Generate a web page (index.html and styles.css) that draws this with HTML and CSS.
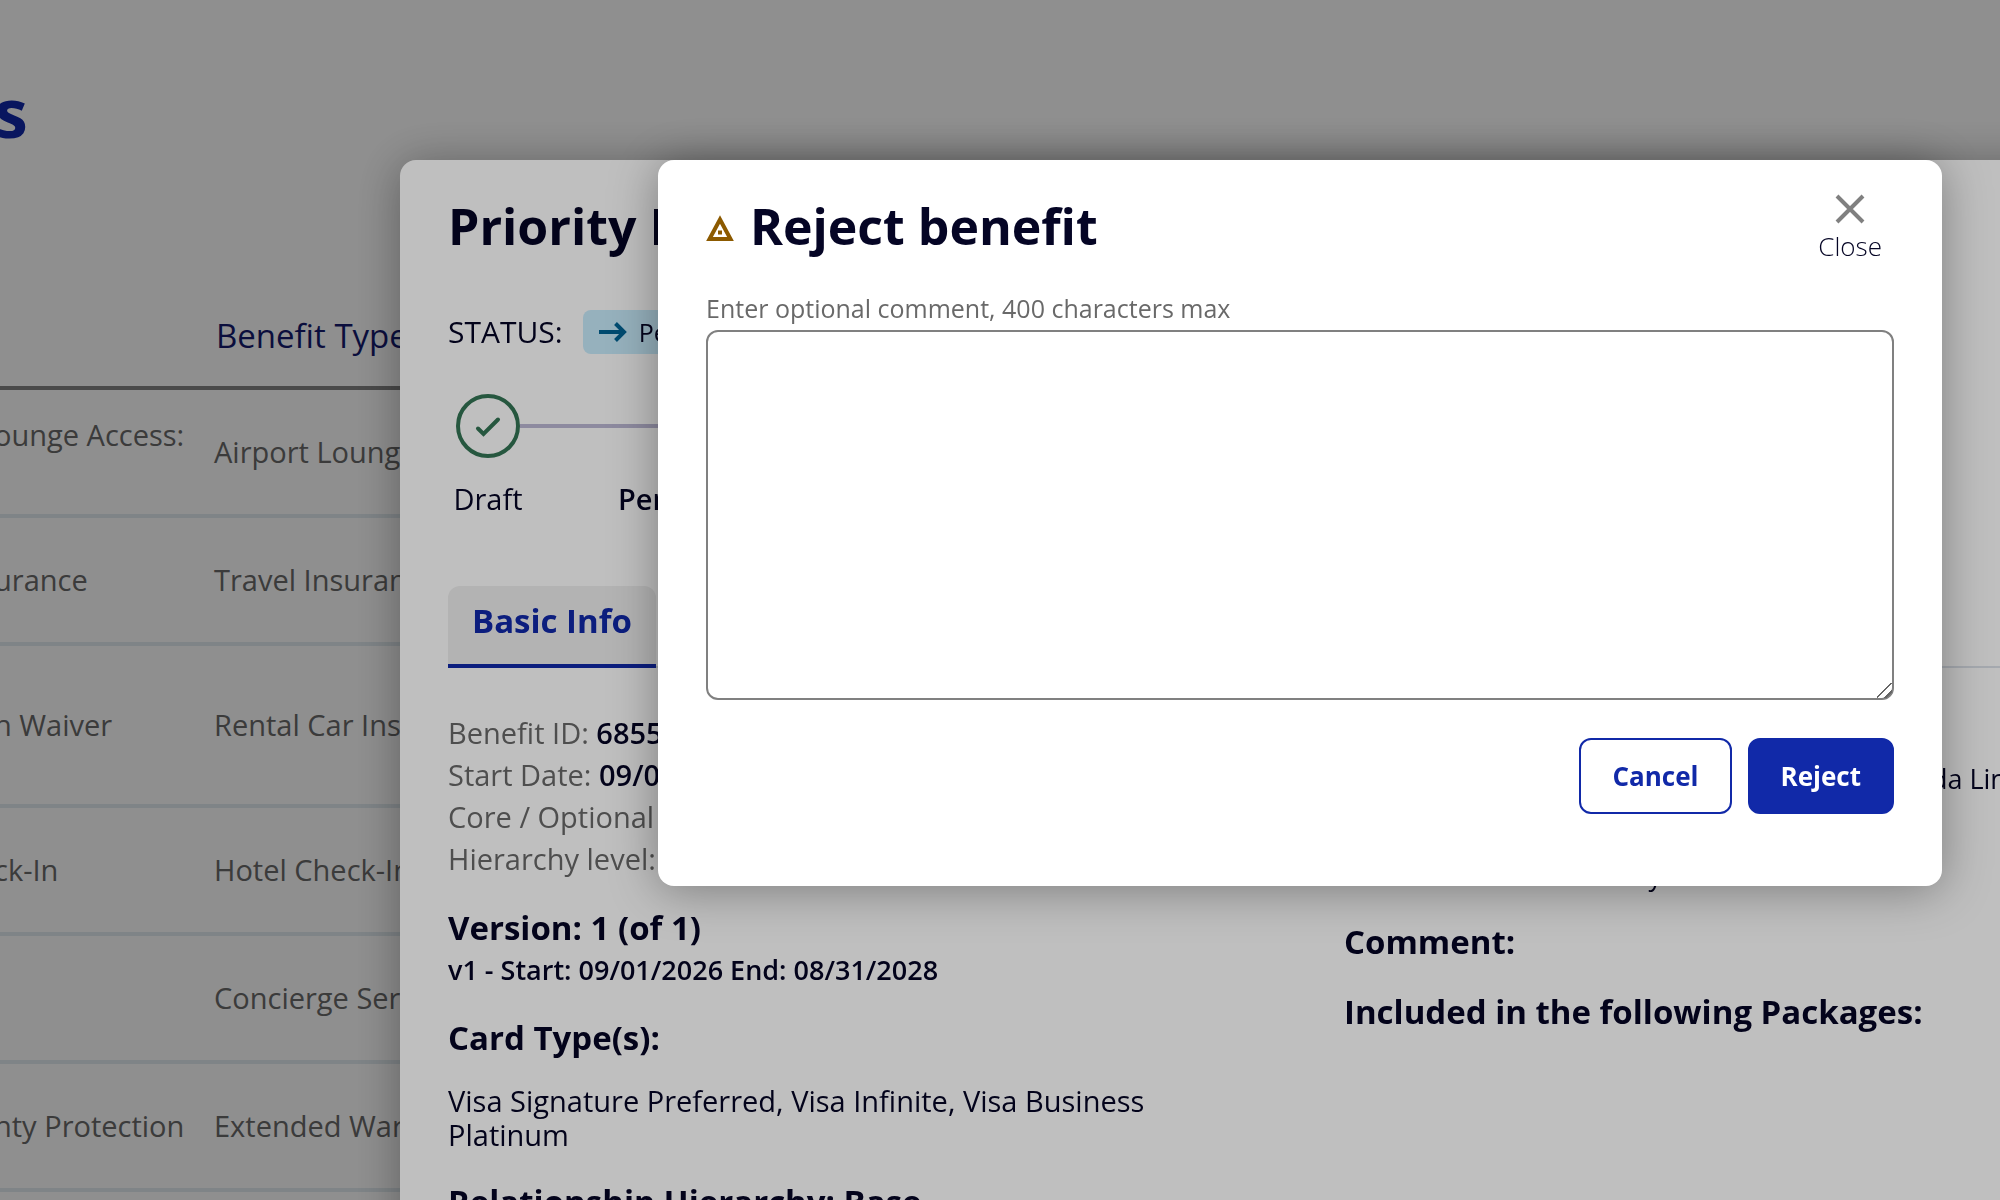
FILE: index.html
```
<!DOCTYPE html>
<html lang="en">
  <head>
    <meta charset="utf-8" />
    <meta name="viewport" content="width=device-width, initial-scale=1" />
    <title>Benefits</title>
    <link rel="stylesheet" href="styles.css">
  </head>
  <body>
    <main class="page">
      <h1>s</h1>
      <table class="benefits">
        <thead>
          <tr>
            <th class="name-col"></th>
            <th>Benefit Type</th>
          </tr>
        </thead>
        <tbody>
          <tr>
            <td>ounge Access:<br />&nbsp;</td>
            <td>Airport Lounge</td>
          </tr>
          <tr>
            <td>urance</td>
            <td>Travel Insurance</td>
          </tr>
          <tr>
            <td>&nbsp;<br />n Waiver<br />&nbsp;</td>
            <td>Rental Car Insurance</td>
          </tr>
          <tr>
            <td>ck-In</td>
            <td>Hotel Check-In</td>
          </tr>
          <tr>
            <td></td>
            <td>Concierge Service</td>
          </tr>
          <tr>
            <td>nty Protection</td>
            <td>Extended Warranty</td>
          </tr>
        </tbody>
      </table>
    </main>

    <!-- benefit details -->
    <div class="overlay">
      <section class="panel">
        <h2>Priority Pass</h2>
        <div class="status">
          <span>STATUS:</span>
          <span class="chip">
            <svg width="28" height="20" viewBox="0 0 28 20" fill="none" stroke="#006496" stroke-width="4">
              <path d="M0 10h25M16.500 1.500l8.500 8.500-8.500 8.500" />
            </svg>
            Pending
          </span>
        </div>
        <ol class="steps">
          <li>
            <svg width="64" height="64" viewBox="0 0 64 64" fill="none" stroke="#337454" stroke-width="4">
              <circle cx="32" cy="32" r="30" />
              <path d="M22 34.500l5.500 5.500 14.500-14.500" stroke-linecap="round" />
            </svg>
            <span>Draft</span>
          </li>
          <li class="current">
            <svg width="64" height="64" viewBox="0 0 64 64" fill="none" stroke="#1028a9" stroke-width="4">
              <circle cx="32" cy="32" r="30" />
            </svg>
            <span>Pending Approval</span>
          </li>
        </ol>
        <div class="tabs">
          <button type="button" class="tab">Basic Info</button>
        </div>
        <div class="details">
          <div>
            <ul class="info">
              <li>Benefit ID: <b>68550</b></li>
              <li>Start Date: <b>09/01/2026</b></li>
              <li>Core / Optional <b>Core</b></li>
              <li>Hierarchy level: <b>Base</b></li>
            </ul>
            <h3>Version: 1 (of 1)</h3>
            <p class="version">v1 - Start: 09/01/2026 End: 08/31/2028</p>
            <h3>Card Type(s):</h3>
            <p class="cards">Visa Signature Preferred, Visa Infinite, Visa Business Platinum</p>
            <h3>Relationship Hierarchy: Base</h3>
          </div>
          <div class="history">
            <h3>History:</h3>
            <ul class="log">
              <li><span class="log-date">06/20/2026 Created</span><span>Linda Lindgren</span></li>
              <li>Sent for review</li>
              <li>06/21/2026 Submitted by</li>
            </ul>
            <h3>Comment:</h3>
            <h3>Included in the following Packages:</h3>
          </div>
        </div>
      </section>
    </div>

    <!-- reject dialog -->
    <div class="overlay">
      <form class="modal" role="dialog" aria-labelledby="modal-title">
        <div class="modal-header">
          <svg width="28" height="26" viewBox="0 0 28 26" fill="none" stroke="#8c5a00" stroke-width="4">
            <path d="M14 4.500L24.500 24H3.500z" />
            <path d="M12 17.500h4" />
          </svg>
          <h2 id="modal-title">Reject benefit</h2>
          <button type="button" class="close">
            <svg width="30" height="30" viewBox="0 0 30 30" fill="none" stroke="#808080" stroke-width="4">
              <path d="M2 2l26 26M28 2L2 28" />
            </svg>
            Close
          </button>
        </div>
        <label for="comment">Enter optional comment, 400 characters max</label>
        <textarea id="comment" name="comment" maxlength="400"></textarea>
        <div class="actions">
          <button type="button" class="btn">Cancel</button>
          <button type="submit" class="btn primary">Reject</button>
        </div>
      </form>
    </div>
  </body>
</html>
```
FILE: styles.css
```
* {
  box-sizing: border-box;
}
body {
  margin: 0;
  height: 100vh;
  overflow: hidden;
  background: #fff;
  color: #050525;
  font-family: "Open Sans", sans-serif;
  font-size: 29px;
  line-height: 34px;
}
h1, h2, h3, p, ul, ol {
  margin: 0;
  padding: 0;
}
ul, ol {
  list-style: none;
}
button {
  font-family: inherit;
  cursor: pointer;
}
h2 {
  font-size: 50px;
  line-height: 60px;
}
h3 {
  font-size: 33px;
  line-height: 40px;
}

/* table page */
.page {
  padding-top: 72px;
  margin-left: -6px;
}
h1 {
  font-size: 68px;
  line-height: 80px;
  color: #1028a9;
  margin-bottom: 140px;
}
.benefits {
  width: 100%;
  border-spacing: 0;
}
.benefits th {
  padding: 22px 0 28px 2px;
  font-size: 33px;
  font-weight: 400;
  line-height: 44px;
  text-align: left;
  color: #141a6e;
  border-bottom: 4px solid #848484;
}
.benefits .name-col {
  width: 220px;
}
.benefits td {
  height: 128px;
  padding: 28px 0;
  color: #696969;
  border-bottom: 4px solid #e2ebf0;
}

/* overlays */
.overlay {
  position: fixed;
  inset: 0;
  padding-top: 160px;
  background: rgba(0, 0, 0, 0.25);
  overflow: hidden;
}
.panel,
.modal {
  background: #fff;
  border-radius: 16px;
  box-shadow: 0 4px 48px rgba(0, 0, 0, 0.35);
}

/* details panel */
.panel {
  width: 90%;
  min-height: 100%;
  margin-left: 20%;
  padding: 36px 48px;
}
.status {
  display: flex;
  align-items: center;
  gap: 20px;
  margin-top: 54px;
  font-size: 30px;
  line-height: 44px;
}
.chip {
  display: flex;
  align-items: center;
  gap: 12px;
  padding: 0 16px;
  border-radius: 8px;
  background: #c8ecfd;
  font-size: 25px;
}
.steps {
  display: flex;
  margin-top: 40px;
}
.steps li {
  position: relative;
  display: flex;
  flex-direction: column;
  align-items: center;
  gap: 24px;
  width: 80px;
  margin-right: 90px;
}
.steps li:first-child::after {
  content: "";
  position: absolute;
  top: 30px;
  left: 72px;
  width: 188px;
  height: 4px;
  background: #bcb9d5;
}
.steps .current {
  width: auto;
  font-weight: 600;
}
.tabs {
  display: flex;
  margin-top: 70px;
  background: linear-gradient(#dde2ea, #dde2ea) bottom / 100% 2px no-repeat;
}
.tab {
  padding: 15px 24px 23px;
  border: 0;
  border-bottom: 4px solid #1028a9;
  border-radius: 12px 12px 0 0;
  background: #efefef;
  color: #1028a9;
  font-size: 33px;
  font-weight: 700;
  line-height: 40px;
}
.details {
  display: grid;
  grid-template-columns: 1fr 1fr;
  gap: 88px;
  margin-top: 44px;
}
.info {
  line-height: 42px;
  color: #696969;
}
.info b {
  font-weight: 600;
  color: #050525;
}
.details h3 {
  margin-top: 28px;
}
.version {
  margin-top: 2px;
  font-size: 27px;
  font-weight: 600;
  line-height: 40px;
}
.cards {
  margin: 26px 0 30px;
}
.details .history h3 {
  margin-top: 30px;
}
.details .history h3:first-child {
  margin-top: 0;
}
.log {
  display: flex;
  flex-direction: column;
  gap: 14px;
  padding-top: 10px;
  font-size: 27px;
}
.log li {
  display: flex;
  white-space: nowrap;
}
.log-date {
  width: 68%;
}

/* reject dialog */
.modal {
  display: flex;
  flex-direction: column;
  margin: 0 58px 0 658px;
  padding: 34px 48px 72px;
}
.modal-header {
  display: flex;
  align-items: flex-start;
  gap: 16px;
  height: 97px;
}
.modal-header > svg {
  margin-top: 21px;
}
.modal-header h2 {
  flex: 1;
  margin-top: 2px;
}
.close {
  display: flex;
  flex-direction: column;
  align-items: center;
  gap: 5px;
  padding: 0 12px;
  border: 0;
  background: none;
  color: #050525;
  font-size: 26px;
  font-weight: 300;
  line-height: 34px;
}
.modal label {
  margin-bottom: 5px;
  font-size: 25px;
  color: #696969;
}
.modal textarea {
  height: 370px;
  padding: 16px;
  border: 2px solid #808080;
  border-radius: 12px;
  font-family: inherit;
  font-size: 25px;
  resize: vertical;
}
.modal textarea::-webkit-resizer {
  background: linear-gradient(135deg, transparent 46%, #666 46% 53%, transparent 53% 73%, #666 73% 80%, transparent 80%);
}
.actions {
  display: flex;
  justify-content: flex-end;
  gap: 16px;
  margin-top: 38px;
}
.btn {
  padding: 19px 31px;
  border: 2px solid #1129a8;
  border-radius: 12px;
  background: #fff;
  color: #1129a8;
  font-size: 26px;
  font-weight: 700;
  line-height: 34px;
}
.btn.primary {
  background: #1129a8;
  color: #fff;
}
```
